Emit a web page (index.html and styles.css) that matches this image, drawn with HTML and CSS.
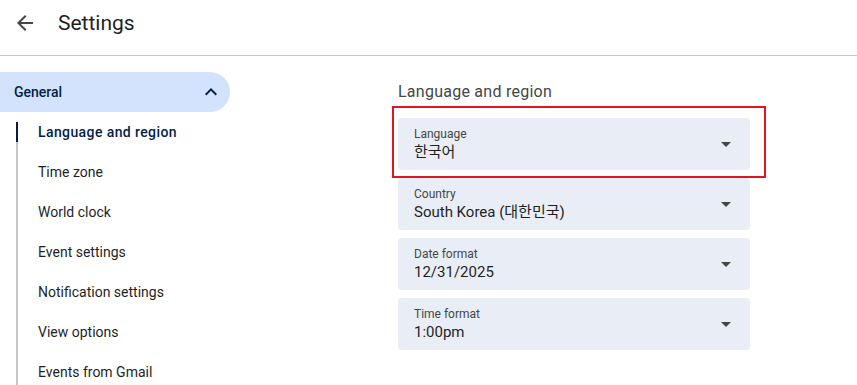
FILE: index.html
```html
<!DOCTYPE html>
<html lang="en">
<head>
    <meta charset="UTF-8">
    <meta name="viewport" content="width=device-width, initial-scale=1.0">
    <title>Settings</title>
    <link rel="stylesheet" href="styles.css">
</head>
<body>
    <header class="topbar">
        <button class="back-btn" aria-label="Back">
            <svg width="24" height="24" viewBox="0 0 24 24"><path d="M20 11H7.83l5.59-5.59L12 4l-8 8 8 8 1.41-1.41L7.83 13H20v-2z" fill="#444746"/></svg>
        </button>
        <h1 class="title">Settings</h1>
    </header>

    <div class="layout">
        <nav class="sidebar">
            <div class="group-head">
                <span>General</span>
                <svg class="chevron" width="24" height="24" viewBox="0 0 24 24"><path d="M12 8l-6 6 1.41 1.41L12 10.83l4.59 4.58L18 14z" fill="#041e49"/></svg>
            </div>
            <ul class="submenu">
                <li class="active">Language and region</li>
                <li>Time zone</li>
                <li>World clock</li>
                <li>Event settings</li>
                <li>Notification settings</li>
                <li>View options</li>
                <li>Events from Gmail</li>
            </ul>
        </nav>

        <main class="content">
            <h2 class="section-title">Language and region</h2>
            <div class="fields">
                <div class="field highlighted">
                    <div class="field-text">
                        <div class="field-label">Language</div>
                        <div class="field-value">한국어</div>
                    </div>
                    <span class="caret"></span>
                </div>
                <div class="field">
                    <div class="field-text">
                        <div class="field-label">Country</div>
                        <div class="field-value">South Korea (대한민국)</div>
                    </div>
                    <span class="caret"></span>
                </div>
                <div class="field">
                    <div class="field-text">
                        <div class="field-label">Date format</div>
                        <div class="field-value">12/31/2025</div>
                    </div>
                    <span class="caret"></span>
                </div>
                <div class="field">
                    <div class="field-text">
                        <div class="field-label">Time format</div>
                        <div class="field-value">1:00pm</div>
                    </div>
                    <span class="caret"></span>
                </div>
            </div>
        </main>
    </div>
</body>
</html>
```

FILE: styles.css
```css
body {
    margin: 0;
    font-family: Roboto, "Noto Sans CJK KR", sans-serif;
    color: #1f1f1f;
    background-color: #fff;
    overflow: hidden;
}

.topbar {
    display: flex;
    align-items: center;
    height: 24px;
    padding: 11px 0 20px;
    border-bottom: 1px solid #c7c7c7;
}

.back-btn {
    display: flex;
    align-items: center;
    justify-content: center;
    width: 24px;
    height: 24px;
    margin-left: 13px;
    padding: 0;
    border: none;
    background: none;
}

.title {
    margin: 0 0 0 21px;
    font-size: 21px;
    line-height: 24px;
    font-weight: 400;
    color: #1f1f1f;
}

.layout {
    display: flex;
}

.sidebar {
    width: 230px;
    padding-top: 16px;
}

.group-head {
    display: flex;
    align-items: center;
    justify-content: space-between;
    height: 40px;
    padding: 0 7px 0 14px;
    border-radius: 0 20px 20px 0;
    background-color: #d3e3fd;
    font-size: 14px;
    font-weight: 500;
    color: #041e49;
}

.submenu {
    position: relative;
    list-style: none;
    margin: 0 0 0 16px;
    padding: 0;
}

.submenu::before {
    content: "";
    position: absolute;
    left: 0;
    top: 10px;
    bottom: 0;
    width: 2px;
    background-color: #c4c7c5;
}

.submenu li {
    position: relative;
    height: 40px;
    line-height: 40px;
    padding-left: 22px;
    font-size: 14px;
    color: #1f1f1f;
}

.submenu li.active {
    font-weight: 500;
    letter-spacing: 0.4px;
    color: #041e49;
}

.submenu li.active::before {
    content: "";
    position: absolute;
    left: 0;
    top: 10px;
    width: 2px;
    height: 20px;
    background-color: #041e49;
}

.content {
    margin-left: 168px;
    padding-top: 24px;
    width: 352px;
}

.section-title {
    margin: 0 0 14px;
    font-size: 16px;
    line-height: 24px;
    font-weight: 400;
    letter-spacing: 0.25px;
    color: #444746;
}

.fields {
    display: flex;
    flex-direction: column;
    gap: 8px;
}

.field {
    position: relative;
    display: flex;
    align-items: center;
    justify-content: space-between;
    height: 52px;
    padding: 0 19px 0 16px;
    border-radius: 4px;
    background-color: #e9eef6;
    box-sizing: border-box;
}

.field.highlighted::after {
    content: "";
    position: absolute;
    left: -6px;
    top: -12px;
    right: -16px;
    bottom: -8px;
    border: 2px solid #e2141f;
}

.field-label {
    font-size: 12px;
    line-height: 16px;
    color: #444746;
}

.field-value {
    font-size: 15px;
    line-height: 20px;
    color: #1f1f1f;
}

.caret {
    width: 0;
    height: 0;
    border-left: 5px solid transparent;
    border-right: 5px solid transparent;
    border-top: 5px solid #444746;
}
```
